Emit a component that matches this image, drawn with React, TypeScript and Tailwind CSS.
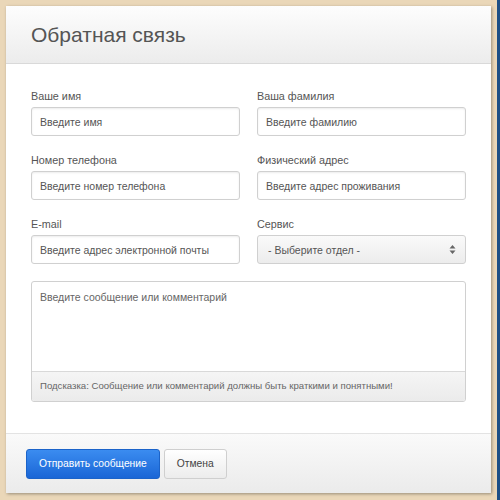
import React from "react";

const Field = ({ label, placeholder }: { label: string; placeholder: string }) => (
  <div className="flex flex-col">
    <label className="mb-[4px] text-[10.8px] leading-[14px] text-[#555]">{label}</label>
    <input
      placeholder={placeholder}
      className="h-[29px] w-full rounded-[3px] border border-[#d0d0d0] bg-white px-[8px] text-[10.5px] text-[#333] placeholder:text-[#555] shadow-[inset_0_1px_2px_rgba(0,0,0,0.08)] outline-none"
    />
  </div>
);

const App = () => {
  return (
    <div className="flex h-[500px] w-[500px] bg-[#ead7b8] font-['Liberation_Sans',Arial,sans-serif]">
      <div className="flex-1 pl-[6px] pt-[6px] pr-[6px] pb-[7px]">
        <div className="flex h-full flex-col bg-white shadow-[1px_1px_3px_rgba(0,0,0,0.35)]">
          <header className="flex h-[58px] items-center border-b border-[#d9d9d9] bg-gradient-to-b from-[#fdfdfd] to-[#ececec] px-[25px]">
            <h1 className="text-[21px] text-[#555]">Обратная связь</h1>
          </header>

          <main className="flex flex-1 flex-col px-[25px] pt-[25px]">
            <div className="grid grid-cols-2 gap-x-[17px] gap-y-[17px]">
              <Field label="Ваше имя" placeholder="Введите имя" />
              <Field label="Ваша фамилия" placeholder="Введите фамилию" />
              <Field label="Номер телефона" placeholder="Введите номер телефона" />
              <Field label="Физический адрес" placeholder="Введите адрес проживания" />
              <Field label="E-mail" placeholder="Введите адрес электронной почты" />
              <div className="flex flex-col">
                <label className="mb-[4px] text-[10.8px] leading-[14px] text-[#555]">Сервис</label>
                <div className="relative h-[29px] rounded-[3px] border border-[#d0d0d0] bg-gradient-to-b from-[#fafafa] to-[#ececec]">
                  <span className="absolute left-[10px] top-[7px] text-[10.5px] text-[#555]">- Выберите отдел -</span>
                  <svg className="absolute right-[9px] top-[8px]" width="7" height="11" viewBox="0 0 7 11">
                    <path d="M3.5 1 L6.5 4.5 H0.5 Z M3.5 10 L6.5 6.5 H0.5 Z" fill="#666" />
                  </svg>
                </div>
              </div>
            </div>

            <div className="mt-[17px] flex flex-col overflow-hidden rounded-[3px] border border-[#d0d0d0]">
              <textarea
                placeholder="Введите сообщение или комментарий"
                className="h-[89px] resize-none px-[8px] py-[8px] text-[10.5px] text-[#333] placeholder:text-[#666] outline-none"
              />
              <div className="flex h-[30px] items-center border-t border-[#d9d9d9] bg-gradient-to-b from-[#f5f5f5] to-[#ebebeb] px-[8px] text-[9.6px] text-[#666]">
                Подсказка: Сообщение или комментарий должны быть краткими и понятными!
              </div>
            </div>
          </main>

          <footer className="flex h-[60px] items-center gap-[4px] border-t border-[#e3e3e3] bg-gradient-to-b from-[#fafafa] to-[#ebebeb] px-[20px]">
            <button className="h-[30px] rounded-[3px] border border-[#1b63c9] bg-gradient-to-b from-[#3b8cf0] to-[#1a66d6] px-[12px] text-[10.3px] text-white">
              Отправить сообщение
            </button>
            <button className="h-[30px] rounded-[3px] border border-[#cfcfcf] bg-gradient-to-b from-[#ffffff] to-[#ececec] px-[12px] text-[10.3px] text-[#444]">
              Отмена
            </button>
          </footer>
        </div>
      </div>
      <div className="w-[3px] bg-[#1d4f86]" />
    </div>
  );
};

export default App;
